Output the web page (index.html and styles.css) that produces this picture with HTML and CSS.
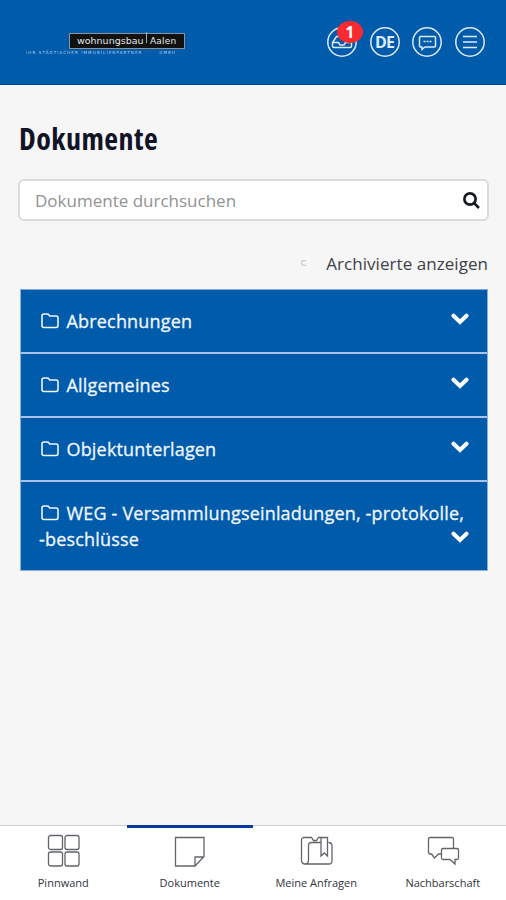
FILE: index.html
```html
<!DOCTYPE html>
<html lang="de">
<head>
<meta charset="utf-8">
<meta name="viewport" content="width=device-width, initial-scale=1">
<title>Dokumente</title>
<link rel="stylesheet" href="styles.css">
</head>
<body>
<header class="topbar">
  <div class="logo">
    <div class="logo-box"><span class="logo-first">wohnungsbau</span><span class="logo-bar"></span><span class="logo-second">Aalen</span></div>
    <div class="logo-sub"><span>IHR STÄDTISCHER IMMOBILIENPARTNER</span><span>GMBH</span></div>
  </div>
  <nav class="actions">
    <a class="action"><svg viewBox="0 0 30 30"><circle cx="15" cy="15" r="14.2"/><path d="M5.500 15.500l4-6h11l4 6V19q0 1.500-1.500 1.500H7q-1.500 0-1.500-1.500zM5.500 15.500h6l1.500 2.500h4l1.500-2.500h6"/></svg><span class="badge">1</span></a>
    <a class="action"><svg viewBox="0 0 30 30"><circle cx="15" cy="15" r="14.2"/></svg><span class="lang">DE</span></a>
    <a class="action"><svg viewBox="0 0 30 30"><circle cx="15" cy="15" r="14.2"/><path d="M8.500 9.500h14q1 0 1 1v8.500q0 1-1 1H13l-3 2.500V20H8.500q-1 0-1-1v-8.500q0-1 1-1z"/><path class="dots" d="M11.500 14.500h2m1 0h2m1 0h2"/></svg></a>
    <a class="action"><svg viewBox="0 0 30 30"><circle cx="15" cy="15" r="14.2"/><path d="M8 9.500h14M8 15h14M8 20.500h14"/></svg></a>
  </nav>
</header>
<main class="content">
  <h1 class="title">Dokumente</h1>
  <div class="search"><span>Dokumente durchsuchen</span><svg viewBox="0 0 16 16"><circle cx="6.600" cy="6.600" r="5.300"/><path d="M10.500 10.500l4.500 4.500"/></svg></div>
  <div class="archive"><span class="switch"></span><span class="archive-label">Archivierte anzeigen</span></div>
  <ul class="list">
    <li class="row"><span class="name"><svg class="folder" viewBox="0 0 18 16"><path d="M1 3q0-2 2-2h3q1.500 0 2 1l.5 1H15q2 0 2 2v7.500q0 2-2 2H3q-2 0-2-2z"/></svg>Abrechnungen</span><svg class="chevron" viewBox="0 0 18 12"><path d="M2.500 2.700L9 9l6.500-6.300"/></svg></li>
    <li class="row"><span class="name"><svg class="folder" viewBox="0 0 18 16"><path d="M1 3q0-2 2-2h3q1.500 0 2 1l.5 1H15q2 0 2 2v7.500q0 2-2 2H3q-2 0-2-2z"/></svg>Allgemeines</span><svg class="chevron" viewBox="0 0 18 12"><path d="M2.500 2.700L9 9l6.500-6.300"/></svg></li>
    <li class="row"><span class="name"><svg class="folder" viewBox="0 0 18 16"><path d="M1 3q0-2 2-2h3q1.500 0 2 1l.5 1H15q2 0 2 2v7.500q0 2-2 2H3q-2 0-2-2z"/></svg>Objektunterlagen</span><svg class="chevron" viewBox="0 0 18 12"><path d="M2.500 2.700L9 9l6.500-6.300"/></svg></li>
    <li class="row"><span class="name"><svg class="folder" viewBox="0 0 18 16"><path d="M1 3q0-2 2-2h3q1.500 0 2 1l.5 1H15q2 0 2 2v7.500q0 2-2 2H3q-2 0-2-2z"/></svg>WEG - Versammlungseinladungen, -protokolle,<br>-beschlüsse</span><svg class="chevron" viewBox="0 0 18 12"><path d="M2.500 2.700L9 9l6.500-6.300"/></svg></li>
  </ul>
</main>
<nav class="tabs">
  <a class="tab"><svg viewBox="0 0 34 34"><rect x="1.500" y="1.500" width="14" height="14" rx="2"/><rect x="18" y="1.500" width="14" height="14" rx="2"/><rect x="1.500" y="18" width="14" height="14" rx="2"/><rect x="18" y="18" width="14" height="14" rx="2"/></svg><span>Pinnwand</span></a>
  <a class="tab active"><svg viewBox="0 0 34 34"><path d="M1.500 3.500h28.500v19l-9 9.500H1.500zM21 32v-9h9"/></svg><span>Dokumente</span></a>
  <a class="tab"><svg viewBox="0 0 34 34"><path d="M21 3.500h-2.500l-2 3h-3l-2-3h-7Q1.500 3.500 1.500 6v20.500q0 3 3 3.500H29q3 0 3-3.500V12q0-3.500-3.500-3.500M21 8.500H11.500q-3 0-3 3V26q0 3.500-3 4M21 3.500h6.500v18.500l-3.200-3-3.300 3z"/></svg><span>Meine Anfragen</span></a>
  <a class="tab"><svg viewBox="0 0 34 34"><path d="M14 20H11.500l-4 4-3-4H3q-1.500 0-1.500-2V5q0-1.500 1.500-1.500h22q1.500 0 1.500 1.500v9.500M16 14.500h14q1.500 0 1.500 1.500v8q0 1.500-1.500 1.500h-2V30l-5-4.500h-7q-1.500 0-1.500-1.500v-8q0-1.500 1.500-1.500z"/></svg><span>Nachbarschaft</span></a>
</nav>
</body>
</html>
```
FILE: styles.css
```css
* { box-sizing: border-box; }
body {
  margin: 0;
  height: 900px;
  display: flex;
  flex-direction: column;
  overflow: hidden;
  background: #f6f6f6;
  color: #1b1f2c;
  font-family: "Open Sans", sans-serif;
}
svg { display: block; fill: none; stroke: currentColor; }
.topbar {
  height: 85px;
  flex: none;
  display: flex;
  justify-content: space-between;
  padding: 27px 21px 0 26px;
  background: #005bab;
  border-bottom: 1px solid #00439a;
  color: #dfeaff;
}
.logo { width: 160px; padding-top: 6px; }
.logo-box {
  width: 116px;
  height: 16px;
  margin-left: 43px;
  display: flex;
  align-items: center;
  padding-left: 7px;
  background: #111;
  border: 1px solid #8c9296;
  color: #e5e5e5;
  font: 9.5px/12px "DejaVu Sans", sans-serif;
}
.logo-first { width: 67px; }
.logo-bar { width: 1px; height: 11px; margin: -8px 3px 0 2px; background: #9badb8; }
.logo-second { font-size: 9px; letter-spacing: 0.2px; }
.logo-sub {
  display: flex;
  justify-content: space-between;
  width: 150px;
  margin-top: 1px;
  color: #b3d2f0;
  font: 4px/5px "DejaVu Sans", sans-serif;
  letter-spacing: 1.12px;
  white-space: nowrap;
}
.actions { display: flex; gap: 12.7px; }
.action { position: relative; width: 30px; height: 30px; display: flex; align-items: center; justify-content: center; }
.action svg { width: 30px; height: 30px; stroke-width: 1.5; }
.action .dots { stroke-width: 1.6; }
.lang { position: absolute; font-size: 16px; line-height: 30px; font-weight: 700; letter-spacing: -0.8px; }
.badge {
  position: absolute;
  left: 10px;
  top: -6px;
  width: 26px;
  height: 22px;
  border-radius: 50%;
  background: #fa2a30;
  color: #fff;
  font-size: 16px;
  line-height: 22px;
  font-weight: 700;
  text-align: center;
}
.content { flex: 1; padding: 34px 17px 0 19px; }
.title {
  margin: 0;
  height: 40px;
  font-size: 30px;
  line-height: 40px;
  font-weight: 700;
  font-stretch: 75%;
  letter-spacing: 0.45px;
  color: #111427;
  white-space: nowrap;
}
.search {
  height: 42px;
  margin-top: 20px;
  margin-left: -1px;
  padding: 0 7px 0 15px;
  display: flex;
  align-items: center;
  justify-content: space-between;
  background: #fff;
  border: 2px solid #dbdbdb;
  border-radius: 6px;
  color: #929292;
  font-size: 17px;
}
.search span { white-space: nowrap; }
.search svg { width: 17px; height: 17px; color: #16191d; stroke-width: 2.5; }
.archive {
  height: 24px;
  margin: 30px 1px 0 0;
  display: flex;
  align-items: center;
  justify-content: flex-end;
  gap: 19px;
  color: #3d4148;
  font-size: 17px;
  letter-spacing: 0.05px;
}
.switch { width: 6px; height: 6px; border: 1px solid #c6c6c6; border-right-color: transparent; border-radius: 50%; }
.list { list-style: none; margin: 14px 1px 0; padding: 0; border: 1px solid #8eaedb; border-top-color: #82a7d8; }
.row {
  display: flex;
  justify-content: space-between;
  padding: 18px;
  background: #005bab;
  color: #f1f5ff;
  font-size: 18px;
  line-height: 26px;
  letter-spacing: 0.18px;
  -webkit-text-stroke: 0.3px #f1f5ff;
}
.row + .row { border-top: 2px solid #a9c2e5; }
.name { white-space: nowrap; min-width: 0; flex: 1; }
.folder { display: inline-block; width: 18px; height: 16px; margin: 0 8px 0 1.5px; vertical-align: -1px; stroke-width: 1.6; }
.chevron { width: 18px; height: 12px; flex: none; align-self: flex-end; margin-bottom: 9px; stroke: #fff; stroke-width: 4; stroke-linecap: round; }
.tabs { height: 75px; flex: none; display: grid; grid-template-columns: repeat(4, 1fr); background: #fff; border-top: 1px solid #d2d2d2; }
.tab { position: relative; display: flex; flex-direction: column; align-items: center; padding-top: 8px; color: #30343a; font-size: 11px; line-height: 16px; white-space: nowrap; }
.tab svg { width: 34px; height: 34px; margin: 0 0 7px 2px; color: #62656a; stroke-width: 1.3; }
.active::before { content: ""; position: absolute; left: 0; right: 0; top: -1px; height: 3px; background: #09399b; }
```
